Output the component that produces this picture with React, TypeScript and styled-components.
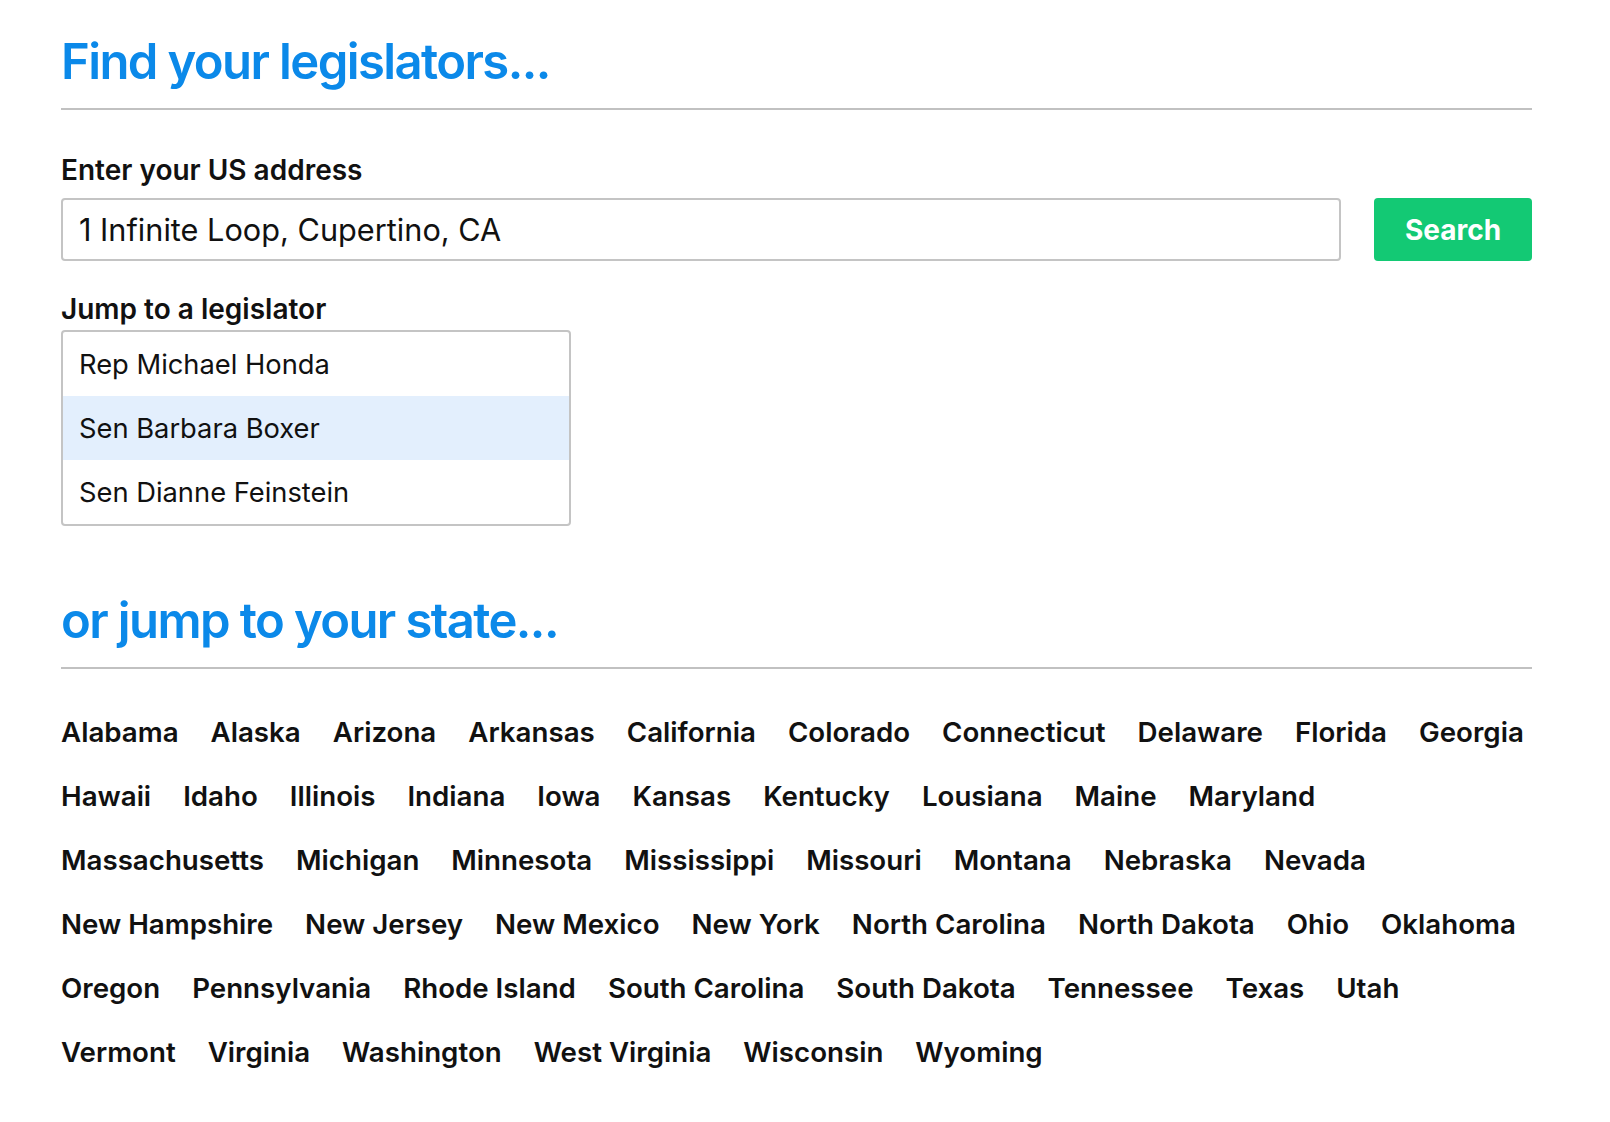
import React from 'react';
import styled, { createGlobalStyle } from 'styled-components';

const GlobalStyle = createGlobalStyle`
  html, body {
    margin: 0;
    padding: 0;
    background: #ffffff;
    font-family: Inter, "Noto Sans", "Liberation Sans", sans-serif;
    color: #111111;
  }
`;

const Page = styled.div`
  width: 1471px;
  padding: 32px 0 40px 61px;
`;

const Heading = styled.h1`
  margin: 0;
  padding-bottom: 16px;
  border-bottom: 2px solid #c1c1c1;
  font-size: 49px;
  line-height: 60px;
  font-weight: 600;
  color: #0b89e9;
  letter-spacing: -1.6px;
`;

const Section = styled.section<{ gap: number }>`
  margin-top: ${props => props.gap}px;
`;

const Label = styled.label`
  display: block;
  font-size: 28px;
  line-height: 32px;
  font-weight: 600;
  color: #111111;
`;

const SearchRow = styled.div`
  display: flex;
  gap: 33px;
  margin-top: 12px;
`;

const AddressInput = styled.input`
  flex: 1;
  box-sizing: border-box;
  height: 63px;
  padding: 0 16px;
  border: 2px solid #c4c4c4;
  border-radius: 4px;
  font-family: inherit;
  font-size: 30.7px;
  color: #111111;
  outline: none;
`;

const SearchButton = styled.button`
  width: 158px;
  height: 63px;
  border: none;
  border-radius: 4px;
  background: #13c974;
  color: #ffffff;
  font-family: inherit;
  font-size: 28px;
  font-weight: 700;
  cursor: pointer;
`;

const LegislatorList = styled.ul`
  list-style: none;
  margin: 5px 0 0 0;
  padding: 0;
  width: 510px;
  box-sizing: border-box;
  border: 2px solid #c4c4c4;
  border-radius: 4px;
  overflow: hidden;
`;

const LegislatorItem = styled.li<{ selected?: boolean }>`
  height: 64px;
  display: flex;
  align-items: center;
  padding: 0 16px;
  font-size: 27.3px;
  color: #111111;
  background: ${props => (props.selected ? '#e3effd' : 'transparent')};
`;

const StateList = styled.div`
  margin-top: 31px;
  display: flex;
  flex-direction: column;
`;

const StateRow = styled.div`
  display: flex;
  column-gap: 32px;
`;

const StateLink = styled.a`
  font-size: 27.7px;
  line-height: 64px;
  font-weight: 600;
  color: #111111;
  text-decoration: none;
  white-space: nowrap;
`;

const legislators = ['Rep Michael Honda', 'Sen Barbara Boxer', 'Sen Dianne Feinstein'];

const stateRows = [
  ['Alabama', 'Alaska', 'Arizona', 'Arkansas', 'California', 'Colorado', 'Connecticut', 'Delaware', 'Florida', 'Georgia'],
  ['Hawaii', 'Idaho', 'Illinois', 'Indiana', 'Iowa', 'Kansas', 'Kentucky', 'Lousiana', 'Maine', 'Maryland'],
  ['Massachusetts', 'Michigan', 'Minnesota', 'Mississippi', 'Missouri', 'Montana', 'Nebraska', 'Nevada'],
  ['New Hampshire', 'New Jersey', 'New Mexico', 'New York', 'North Carolina', 'North Dakota', 'Ohio', 'Oklahoma'],
  ['Oregon', 'Pennsylvania', 'Rhode Island', 'South Carolina', 'South Dakota', 'Tennessee', 'Texas', 'Utah'],
  ['Vermont', 'Virginia', 'Washington', 'West Virginia', 'Wisconsin', 'Wyoming'],
];

const App = () => {
  return (
    <Page>
      <GlobalStyle />
      <Heading>Find your legislators...</Heading>

      <Section gap={44}>
        <Label>Enter your US address</Label>
        <SearchRow>
          <AddressInput defaultValue="1 Infinite Loop, Cupertino, CA" />
          <SearchButton>Search</SearchButton>
        </SearchRow>
      </Section>

      <Section gap={32}>
        <Label>Jump to a legislator</Label>
        <LegislatorList>
          {legislators.map((name, i) => (
            <LegislatorItem key={name} selected={i === 1}>{name}</LegislatorItem>
          ))}
        </LegislatorList>
      </Section>

      <Section gap={65}>
        <Heading as="h2">or jump to your state...</Heading>
        <StateList>
          {stateRows.map((row, i) => (
            <StateRow key={i}>
              {row.map(state => (
                <StateLink key={state} href="#">{state}</StateLink>
              ))}
            </StateRow>
          ))}
        </StateList>
      </Section>
    </Page>
  );
};

export default App;
